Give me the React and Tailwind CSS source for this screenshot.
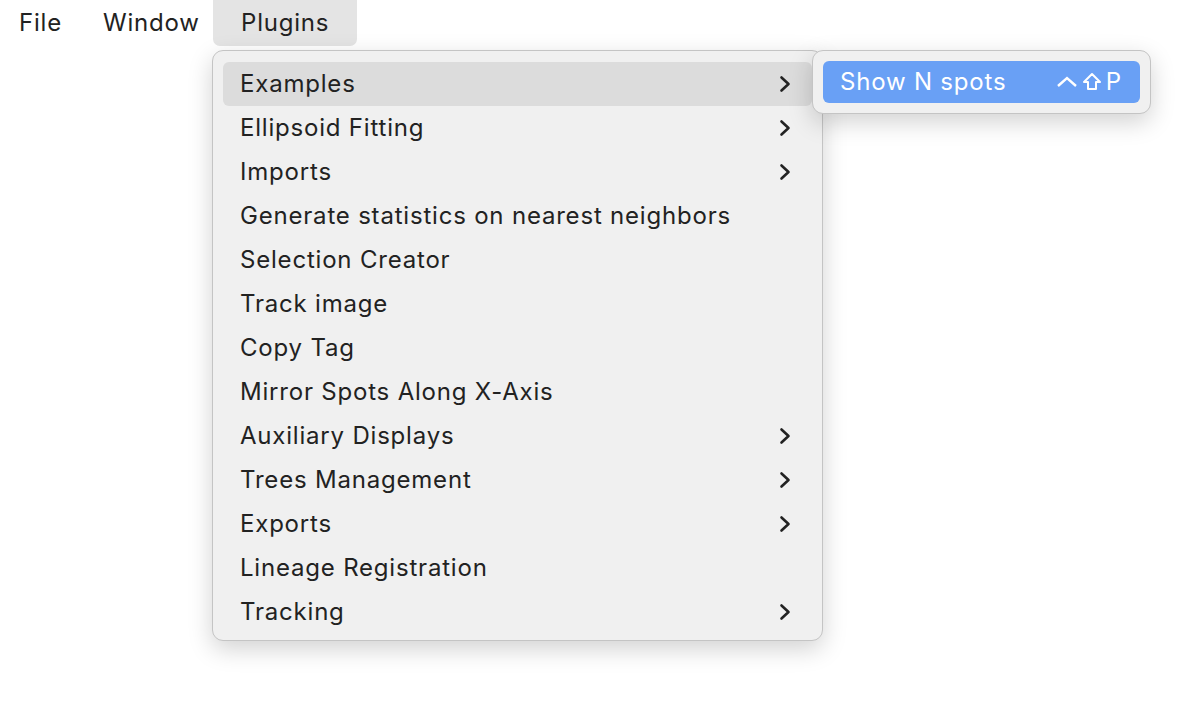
import React from "react";

const items = [
  { label: "Examples", sub: true, active: true },
  { label: "Ellipsoid Fitting", sub: true },
  { label: "Imports", sub: true },
  { label: "Generate statistics on nearest neighbors" },
  { label: "Selection Creator" },
  { label: "Track image" },
  { label: "Copy Tag" },
  { label: "Mirror Spots Along X-Axis" },
  { label: "Auxiliary Displays", sub: true },
  { label: "Trees Management", sub: true },
  { label: "Exports", sub: true },
  { label: "Lineage Registration" },
  { label: "Tracking", sub: true },
];

function Chevron() {
  return (
    <svg width="12" height="18" viewBox="0 0 12 18" className="shrink-0">
      <path d="M2.5 2.5 L9.5 9 L2.5 15.5" fill="none" stroke="#222" strokeWidth="2.6" strokeLinecap="round" strokeLinejoin="round" />
    </svg>
  );
}

export default function App() {
  return (
    <div className="w-[1204px] h-[716px] bg-white relative text-[#222] text-[24px] tracking-[0.8px]" style={{ fontFamily: "Inter, 'Open Sans', sans-serif" }}>
      {/* Menu bar */}
      <div className="flex h-[46px] items-stretch">
        <div className="w-[103px] shrink-0 pl-[19px] flex items-center">File</div>
        <div className="w-[110px] shrink-0 flex items-center">Window</div>
        <div className="w-[144px] shrink-0 pl-[28px] flex items-center bg-[#e4e4e4] rounded-b-[7px]">Plugins</div>
      </div>

      {/* Dropdown */}
      <div className="absolute left-[212px] top-[50px] w-[611px] bg-[#f0f0f0] border border-[#c4c4c4] rounded-[11px] pt-[11px] pb-[6px] px-[10px] shadow-[0_8px_24px_rgba(0,0,0,0.18)]">
        {items.map((it) => (
          <div
            key={it.label}
            className={`h-[44px] flex items-center justify-between pl-[17px] pr-[21px] rounded-[6px] ${it.active ? "bg-[#dcdcdc]" : ""}`}
          >
            <span>{it.label}</span>
            {it.sub && <Chevron />}
          </div>
        ))}
      </div>

      {/* Submenu */}
      <div className="absolute left-[812px] top-[50px] w-[339px] bg-[#f0f0f0] border border-[#c4c4c4] rounded-[11px] p-[10px] shadow-[0_8px_24px_rgba(0,0,0,0.18)]">
        <div className="h-[42px] flex items-center justify-between pl-[17px] pr-[18px] rounded-[6px] bg-[#69a0f5] text-white">
          <span>Show N spots</span>
          <span className="flex items-center gap-[4px]">
            <svg width="22" height="14" viewBox="0 0 22 14">
              <path d="M2 11 L11 3 L20 11" fill="none" stroke="white" strokeWidth="2.4" />
            </svg>
            <svg width="20" height="20" viewBox="0 0 20 20">
              <path d="M10 2 L18 10 L14 10 L14 17 L6 17 L6 10 L2 10 Z" fill="none" stroke="white" strokeWidth="2" strokeLinejoin="round" />
            </svg>
            <span>P</span>
          </span>
        </div>
      </div>
    </div>
  );
}
